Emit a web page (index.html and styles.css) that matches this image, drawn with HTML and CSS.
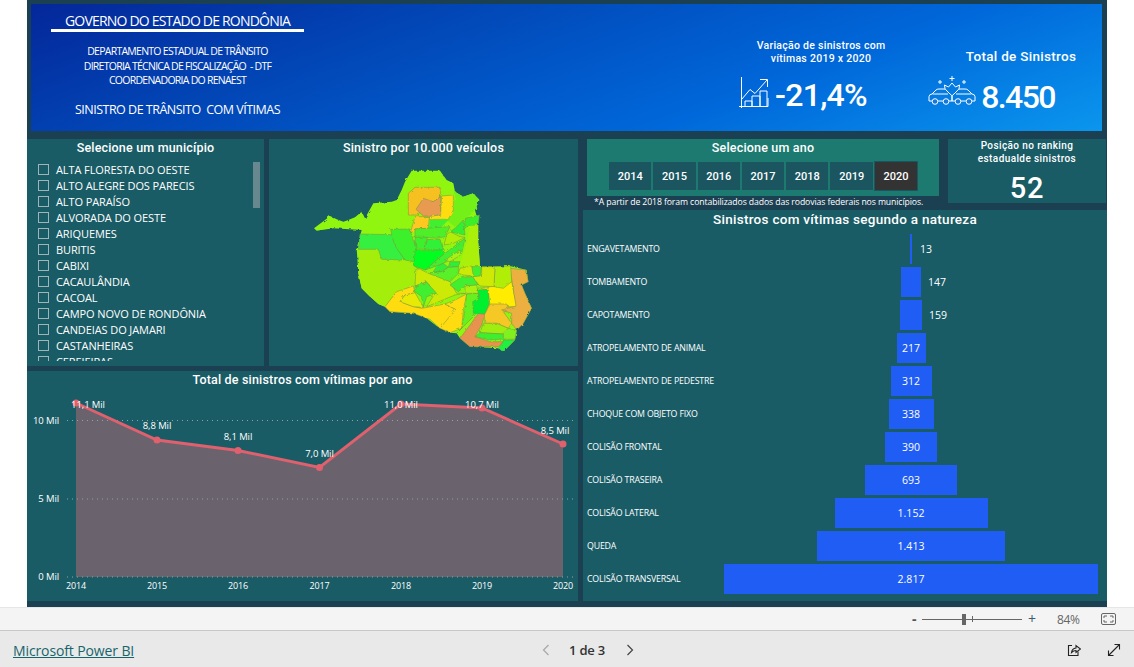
FILE: index.html
```html
<!DOCTYPE html>
<html lang="pt-BR">
<head>
<meta charset="utf-8">
<title>Microsoft Power BI</title>
<link rel="stylesheet" href="styles.css">
</head>
<body>
<main class="canvas">
  <header class="banner">
    <div class="gov">
      <div class="gov-title">GOVERNO DO ESTADO DE RONDÔNIA</div>
      <div class="gov-dept">
        <div>DEPARTAMENTO ESTADUAL DE TRÂNSITO</div>
        <div>DIRETORIA TÉCNICA DE FISCALIZAÇÃO&nbsp; - DTF</div>
        <div>COORDENADORIA DO RENAEST</div>
      </div>
      <div class="gov-sub">SINISTRO DE TRÂNSITO&nbsp; COM VÍTIMAS</div>
    </div>
    <div class="kpi kpi-var">
      <div class="kpi-label">Variação de sinistros com<br>vítimas 2019 x 2020</div>
      <div class="kpi-row">
        <svg class="icon-growth" viewBox="0 0 30 31" fill="none" stroke="#fff" stroke-width="1">
          <path d="M2.500 0V31M0 29.500H29V21"/>
          <path d="M6 29V24H13V29M13 29V19H21V29M21 29V14H28V29"/>
          <path d="M3 22L11 12.500L16 16.500L28 3M21 2.500H28.500V10"/>
        </svg>
        <span class="kpi-value">-21,4%</span>
      </div>
    </div>
    <div class="kpi kpi-total">
      <div class="kpi-label-lg">Total de Sinistros</div>
      <div class="kpi-row kpi-row-total">
        <svg class="icon-crash" viewBox="0 0 48 30" fill="none" stroke="#fff" stroke-width="1">
          <path d="M24 0V5M21.500 2.500H26.500M12 4V8M10 6H14M36 4V8M34 6H38"/>
          <path d="M17 13L16.500 9L20.500 11L24 7L27.500 11L31.500 9L31 13"/>
          <path d="M1 25V20.500Q1 18.500 4 18L8 14Q9 13 11 13H16Q18 13 19 15L22 18Q24 19 24 21V25H1ZM4.500 18H20M24 25V21Q24 19 26 18L29 15Q30 13 32 13H37Q39 13 40 14L44 18Q47 18.500 47 20.500V25H24ZM28 18H43.500"/>
          <circle cx="7" cy="25.500" r="2.800" fill="#1478dd"/>
          <circle cx="18" cy="25.500" r="2.800" fill="#1478dd"/>
          <circle cx="30" cy="25.500" r="2.800" fill="#1478dd"/>
          <circle cx="41" cy="25.500" r="2.800" fill="#1478dd"/>
        </svg>
        <span class="kpi-value kpi-value-total">8.450</span>
      </div>
    </div>
  </header>

  <div class="content">
    <div class="col-left">
      <div class="row-top">
        <section class="panel slicer">
          <h2 class="title">Selecione um município</h2>
          <div class="slicer-body">
            <ul class="mun-list">
              <li><span class="check"></span>ALTA FLORESTA DO OESTE</li>
              <li><span class="check"></span>ALTO ALEGRE DOS PARECIS</li>
              <li><span class="check"></span>ALTO PARAÍSO</li>
              <li><span class="check"></span>ALVORADA DO OESTE</li>
              <li><span class="check"></span>ARIQUEMES</li>
              <li><span class="check"></span>BURITIS</li>
              <li><span class="check"></span>CABIXI</li>
              <li><span class="check"></span>CACAULÂNDIA</li>
              <li><span class="check"></span>CACOAL</li>
              <li><span class="check"></span>CAMPO NOVO DE RONDÔNIA</li>
              <li><span class="check"></span>CANDEIAS DO JAMARI</li>
              <li><span class="check"></span>CASTANHEIRAS</li>
              <li><span class="check"></span>CEREJEIRAS</li>
            </ul>
            <div class="scroll-thumb"></div>
          </div>
        </section>
        <section class="panel map-panel">
          <h2 class="title">Sinistro por 10.000 veículos</h2>
          <svg class="map" viewBox="0 0 780 600" stroke="#7d8f45" stroke-width="1.500" stroke-linejoin="round">
            <defs>
              <filter id="rough" x="-5%" y="-5%" width="110%" height="110%" color-interpolation-filters="sRGB">
                <feTurbulence type="fractalNoise" baseFrequency="0.09" numOctaves="2" seed="4"/>
                <feDisplacementMap in="SourceGraphic" scale="9"/>
              </filter>
            </defs>
            <g class="map-shapes">
            <polygon fill="#90f50f" points="72,205 105,180 120,168 140,178 160,185 175,180 195,172 215,155 225,175 250,130 305,125 320,120 335,90 345,65 365,32 450,32 470,60 490,70 495,95 520,110 550,100 568,120 555,150 565,190 540,200 565,250 570,320 660,318 710,330 715,365 695,375 705,400 725,445 700,490 680,510 675,540 640,575 625,565 540,560 510,535 500,520 480,518 440,498 410,475 370,460 300,455 285,440 265,432 235,405 215,385 205,340 200,265 215,210 130,205 80,212" stroke="none"/>
            <polygon fill="#a3ee0a" points="205,268 265,268 275,298 335,300 370,310 375,350 370,378 320,395 285,440 265,432 235,405 215,385 205,340" stroke="none"/>
            <polygon fill="#72f018" points="495,95 520,110 550,100 568,120 555,150 525,180 495,200 470,180 490,150 495,110" stroke="none"/>
            <polygon fill="#f5c020" points="355,100 375,82 450,82 452,110 430,125 400,125 385,165 355,165"/>
            <polygon fill="#e89a50" points="378,148 400,115 430,125 452,110 452,160 435,168 400,168"/>
            <polygon fill="#ffdc10" points="455,108 490,105 490,150 475,178 418,178 415,170 452,165"/>
            <polygon fill="#ffc820" points="375,170 418,170 415,205 375,207 360,222"/>
            <polygon fill="#40f030" points="418,180 478,178 450,205 418,205" stroke="none"/>
            <polygon fill="#35f040" points="210,222 308,224 315,255 345,298 335,300 275,298 265,268 205,268"/>
            <polygon fill="#3cf02c" points="302,208 360,207 365,225 372,248 380,250 380,300 370,305 345,300 315,258 308,235"/>
            <polygon fill="#4df028" points="375,207 480,200 465,230 440,235 410,232 375,232"/>
            <polygon fill="#3cf02c" points="375,232 412,232 405,268 378,268"/>
            <polygon fill="#30f038" points="412,238 450,238 460,270 405,268"/>
            <polygon fill="#00ff20" points="375,272 455,270 465,278 440,300 405,330 372,318"/>
            <polygon fill="#b0ee08" points="480,215 510,230 525,232 490,250 462,255 470,225"/>
            <polygon fill="#33ee33" points="495,205 520,180 525,225 480,215"/>
            <polygon fill="#3cee2a" points="527,175 568,165 565,195 530,200 520,210"/>
            <polygon fill="#aaf00a" points="540,197 565,195 565,250 570,320 515,320 510,310 530,250" stroke="none"/>
            <polygon fill="#40f030" points="405,330 440,300 465,280 525,235 515,280 495,285 470,305 440,318"/>
            <polygon fill="#aaf010" points="465,300 510,270 512,285 480,305"/>
            <polygon fill="#30ee38" points="440,320 460,310 475,322 455,335 430,335"/>
            <polygon fill="#30ee38" points="480,305 510,305 505,320 475,322"/>
            <polygon fill="#58f028" points="420,338 455,335 475,322 505,320 505,340 480,365 420,352"/>
            <polygon fill="#ccea05" points="378,322 415,340 480,365 500,400 525,400 495,405 410,440 435,400 410,365 375,378"/>
            <polygon fill="#40f030" points="375,378 410,367 440,400 410,410 400,442 395,410 375,395"/>
            <polygon fill="#ffdc10" points="285,440 320,395 370,378 375,398 345,405 330,425 370,440 395,445 465,432 497,448 495,470 450,505 420,478 370,460 300,455"/>
            <polygon fill="#ffdc10" points="465,432 495,420 530,402 520,450 515,505 480,518 450,505 497,448"/>
            <polygon fill="#e8ea05" points="345,405 375,398 400,442 370,440 330,425"/>
            <polygon fill="#66f020" points="530,402 565,400 572,430 555,465 540,480 500,520 515,505 525,450"/>
            <polygon fill="#e8924f" points="565,460 585,462 575,495 555,530 600,545 640,545 625,560 540,560 510,535 540,495"/>
            <polygon fill="#00f030" points="565,390 595,388 600,425 585,462 550,460 548,425 565,415"/>
            <polygon fill="#ffec00" points="565,385 640,375 665,365 680,440 600,440 595,388"/>
            <polygon fill="#f5c825" points="600,432 650,432 665,455 640,455 665,490 655,505 620,490 585,490 583,465"/>
            <polygon fill="#ecb040" points="660,325 708,330 715,365 695,375 705,400 725,445 700,490 680,510 665,490 665,460 635,450 678,438"/>
            <polygon fill="#a0ee10" points="580,490 620,490 655,505 640,522 570,518"/>
            <polygon fill="#3cf030" points="570,518 600,520 640,522 640,537 600,540 555,530"/>
            <polygon fill="#80f020" points="640,520 655,505 680,510 675,538 640,537"/>
            <polygon fill="#20f040" points="640,540 675,540 640,575 625,565 640,545"/>
            <polygon fill="#b0ee08" points="615,320 662,318 665,365 640,385 612,380"/>
            <polygon fill="#ccea05" points="575,320 615,320 612,380 570,378 545,350 575,345"/>
            <polygon fill="#40f030" points="545,320 575,320 570,348 545,350"/>
            <polygon fill="#ccea05" points="510,325 545,318 550,348 520,345 505,340"/>
            <polygon fill="#40f030" points="515,350 548,350 565,375 525,378 505,395 480,375"/>
            <polygon fill="#aaf010" points="525,378 560,375 565,400 525,400"/>
            </g>
          </svg>
        </section>
      </div>
      <section class="panel line-panel">
        <h2 class="title">Total de sinistros com vítimas por ano</h2>
        <svg class="line-chart" viewBox="27 389 551 212">
          <polygon class="area" points="76,403 157,440 238,450.500 319.500,467.500 401,404 482,408 563,444 563,577 76,577"/>
          <path class="grid-line" d="M67 420.500H575M67 499H575M67 577H575"/>
          <polyline class="trend" points="76,403 157,440 238,450.500 319.500,467.500 401,404 482,408 563,444"/>
          <g class="dots">
            <circle cx="76" cy="403" r="3.500"/><circle cx="157" cy="440" r="3.500"/><circle cx="238" cy="450.500" r="3.500"/><circle cx="319.500" cy="467.500" r="3.500"/><circle cx="401" cy="404" r="3.500"/><circle cx="482" cy="408" r="3.500"/><circle cx="563" cy="444" r="3.500"/>
          </g>
          <g class="axis-y">
            <text x="59" y="424">10 Mil</text><text x="59" y="502">5 Mil</text><text x="59" y="580">0 Mil</text>
          </g>
          <g class="axis-x">
            <text x="76" y="589">2014</text><text x="157" y="589">2015</text><text x="238" y="589">2016</text><text x="319.500" y="589">2017</text><text x="401" y="589">2018</text><text x="482" y="589">2019</text><text x="563" y="589">2020</text>
          </g>
          <g class="data-labels">
            <text x="88" y="408">11,1 Mil</text><text x="157" y="429">8,8 Mil</text><text x="238" y="440">8,1 Mil</text><text x="319.500" y="457">7,0 Mil</text><text x="401" y="408">11,0 Mil</text><text x="482" y="408">10,7 Mil</text><text x="555" y="434">8,5 Mil</text>
          </g>
        </svg>
      </section>
    </div>

    <div class="col-right">
      <div class="right-top">
        <div class="year-block">
          <section class="year-panel">
            <h2 class="title">Selecione um ano</h2>
            <div class="years">
              <button class="year">2014</button>
              <button class="year">2015</button>
              <button class="year">2016</button>
              <button class="year">2017</button>
              <button class="year">2018</button>
              <button class="year">2019</button>
              <button class="year year-active">2020</button>
            </div>
          </section>
          <p class="note">*A partir de 2018 foram contabilizados dados das rodovias federais nos municípios.</p>
        </div>
        <section class="panel rank">
          <div class="rank-label">Posição no ranking<br>estadualde sinistros</div>
          <div class="rank-value">52</div>
        </section>
      </div>
      <section class="panel funnel-panel">
        <h2 class="title funnel-title">Sinistros com vítimas segundo a natureza</h2>
        <div class="funnel">
          <div class="f-row"><span class="f-name">ENGAVETAMENTO</span><div class="f-track"><div class="f-bar" style="width:2px"><span class="f-out f-out-13">13</span></div></div></div>
          <div class="f-row"><span class="f-name">TOMBAMENTO</span><div class="f-track"><div class="f-bar" style="width:20px"><span class="f-out">147</span></div></div></div>
          <div class="f-row"><span class="f-name">CAPOTAMENTO</span><div class="f-track"><div class="f-bar" style="width:22px"><span class="f-out">159</span></div></div></div>
          <div class="f-row"><span class="f-name">ATROPELAMENTO DE ANIMAL</span><div class="f-track"><div class="f-bar" style="width:29px">217</div></div></div>
          <div class="f-row"><span class="f-name">ATROPELAMENTO DE PEDESTRE</span><div class="f-track"><div class="f-bar" style="width:41px">312</div></div></div>
          <div class="f-row"><span class="f-name">CHOQUE COM OBJETO FIXO</span><div class="f-track"><div class="f-bar" style="width:45px">338</div></div></div>
          <div class="f-row"><span class="f-name">COLISÃO FRONTAL</span><div class="f-track"><div class="f-bar" style="width:52px">390</div></div></div>
          <div class="f-row"><span class="f-name">COLISÃO TRASEIRA</span><div class="f-track"><div class="f-bar" style="width:92px">693</div></div></div>
          <div class="f-row"><span class="f-name">COLISÃO LATERAL</span><div class="f-track"><div class="f-bar" style="width:153px">1.152</div></div></div>
          <div class="f-row"><span class="f-name">QUEDA</span><div class="f-track"><div class="f-bar" style="width:188px">1.413</div></div></div>
          <div class="f-row"><span class="f-name">COLISÃO TRANSVERSAL</span><div class="f-track"><div class="f-bar" style="width:374px">2.817</div></div></div>
        </div>
      </section>
    </div>
  </div>
</main>

<div class="zoombar">
  <span class="z-minus">-</span>
  <div class="z-slider"><span class="z-tick"></span><span class="z-thumb"></span></div>
  <span class="z-plus">+</span>
  <span class="z-pct">84%</span>
  <svg class="z-fit" viewBox="0 0 15 12" fill="none" stroke="#666" stroke-width="1">
    <rect x="0.500" y="0.500" width="14" height="11" rx="1.500"/>
    <path d="M3 5V3H6M9 3H12V5M12 7V9H9M6 9H3V7"/>
  </svg>
</div>
<footer class="pager">
  <a class="brand" href="#">Microsoft Power BI</a>
  <nav class="pages">
    <svg class="chev" viewBox="0 0 8 12" fill="none" stroke="#a8a8a8" stroke-width="1.200"><path d="M6.500 1L1.500 6L6.500 11"/></svg>
    <span class="page-text">1 de 3</span>
    <svg class="chev" viewBox="0 0 8 12" fill="none" stroke="#444" stroke-width="1.200"><path d="M1.500 1L6.500 6L1.500 11"/></svg>
  </nav>
  <div class="tools">
    <svg class="tool" viewBox="0 0 14 14" fill="none" stroke="#222" stroke-width="1.100">
      <path d="M5 2.500H1.500V12.500H11V8.500"/>
      <path d="M4.500 9.500Q5 5.500 9 5V2.500L13.500 6L9 9.500V7.500Q6.500 7.500 4.500 9.500Z"/>
    </svg>
    <svg class="tool" viewBox="0 0 14 14" fill="none" stroke="#222" stroke-width="1.100">
      <path d="M1.500 12.500L12.500 1.500M7.500 1.500H12.500V6.500M1.500 7.500V12.500H6.500"/>
    </svg>
  </div>
</footer>
</body>
</html>
```
FILE: styles.css
```css
* { box-sizing: border-box; }
html, body { margin: 0; padding: 0; }
body {
  width: 1134px;
  height: 667px;
  overflow: hidden;
  background: #fff;
  font-family: "Open Sans", "Liberation Sans", sans-serif;
  color: #fff;
}
.canvas {
  margin-left: 27px;
  width: 1080px;
  height: 607px;
  background: #1b4052;
  padding-top: 4px;
}
.banner {
  margin-left: 4px;
  width: 1071px;
  height: 127px;
  background: linear-gradient(160deg, #04279a 0%, #0245b5 30%, #0068da 68%, #0a96ee 100%);
  display: flex;
}
.gov {
  flex: none;
  margin-left: 20px;
  width: 253px;
  text-align: center;
  display: flex;
  flex-direction: column;
}
.gov-title {
  font-size: 14px;
  letter-spacing: -0.8px;
  line-height: 17px;
  margin-top: 8px;
  height: 20px;
  border-bottom: 3px solid #fff;
}
.gov-dept {
  font-size: 10.5px;
  letter-spacing: -0.74px;
  line-height: 14.500px;
  margin-top: 12px;
}
.gov-sub {
  font-size: 12.5px;
  letter-spacing: -0.5px;
  line-height: 16px;
  margin-top: 14px;
}
.kpi {
  flex: none;
  display: flex;
  flex-direction: column;
  align-items: center;
}
.kpi-var {
  margin-left: 427px;
  width: 180px;
  padding-top: 35px;
}
.kpi-total {
  margin-left: 31px;
  width: 158px;
  padding-top: 44px;
}
.kpi-label {
  font-family: Roboto, sans-serif;
  font-size: 10.5px;
  font-weight: 500;
  letter-spacing: 0.28px;
  line-height: 13px;
  text-align: center;
}
.kpi-label-lg {
  font-family: Roboto, sans-serif;
  font-size: 13.5px;
  font-weight: 500;
  letter-spacing: 0.3px;
  line-height: 17px;
}
.kpi-row {
  display: flex;
  align-items: center;
  gap: 6px;
  margin-top: 12px;
  margin-right: 36px;
}
.kpi-row-total { margin-top: 14px; margin-right: 59px; gap: 5px; }
.kpi-value {
  font-family: Roboto, sans-serif;
  font-size: 32px;
  font-weight: 500;
  line-height: 36px;
  letter-spacing: -0.7px;
}
.kpi-value-total { letter-spacing: -1.6px; }
.icon-growth { width: 30px; height: 31px; margin-top: -5px; }
.icon-crash { width: 48px; height: 30px; margin-top: -13px; }

.content { display: flex; gap: 5px; margin-top: 8px; }
.col-left { width: 551px; display: flex; flex-direction: column; gap: 5px; }
.col-right { width: 524px; display: flex; flex-direction: column; }
.row-top { display: flex; gap: 5px; height: 227px; }
.panel { background: #1a5c66; }
.title {
  margin: 0;
  font-family: Roboto, sans-serif;
  font-size: 12.5px;
  font-weight: 500;
  line-height: 18px;
  height: 18px;
  letter-spacing: 0.18px;
  text-align: center;
}
.slicer { width: 237px; }
.slicer-body {
  position: relative;
  margin-top: 5px;
  height: 199px;
  overflow: hidden;
}
.mun-list {
  list-style: none;
  margin: 0;
  padding: 0 0 0 11px;
  font-size: 11px;
  letter-spacing: -0.1px;
}
.mun-list li {
  height: 16px;
  line-height: 16px;
  display: flex;
  align-items: center;
}
.check {
  width: 11px;
  height: 11px;
  border: 1px solid #9db4b8;
  margin-right: 7px;
  margin-top: -2px;
  flex: none;
}
.scroll-thumb {
  position: absolute;
  left: 226px;
  top: -3px;
  width: 7px;
  height: 49px;
  background: #66888e;
}
.map-panel { width: 309px; }
.map {
  display: block;
  width: 260px;
  height: 200px;
  margin: 3px 0 0 21px;
}
.map-shapes { filter: url(#rough); }
.line-panel { height: 230px; }
.line-chart { display: block; width: 551px; height: 212px; }
.grid-line { fill: none; stroke: #8ca4a8; stroke-width: 1; stroke-dasharray: 1 4; }
.area { fill: #6a626c; }
.trend { fill: none; stroke: #e0606e; stroke-width: 3; }
.dots circle { fill: #e0606e; }
.line-chart text { fill: #fff; font-family: "Open Sans", sans-serif; font-size: 9.500px; letter-spacing: -0.1px; }
.axis-y text { text-anchor: end; }
.axis-x text { text-anchor: middle; font-size: 9px; }
.data-labels text { text-anchor: middle; }

.right-top { display: flex; height: 71px; padding-left: 4px; gap: 9px; }
.year-block { width: 352px; }
.year-panel { background: #1d7a70; height: 57px; }
.years {
  display: grid;
  grid-template-columns: repeat(7, 42.3px);
  gap: 2px;
  margin: 5px 0 0 22px;
}
.year {
  height: 28px;
  padding: 0;
  border: 0;
  background: #1a5560;
  color: #fff;
  font-family: Roboto, sans-serif;
  font-size: 11px;
  font-weight: 500;
}
.year-active { background: #333333; outline: 1px solid #1a5560; }
.note {
  margin: 1px 0 0;
  padding-left: 7px;
  font-size: 8.7px;
  line-height: 11px;
  letter-spacing: -0.11px;
  white-space: nowrap;
}
.rank { width: 158px; height: 64px; text-align: center; }
.rank-label {
  font-family: Roboto, sans-serif;
  font-size: 10px;
  font-weight: 500;
  line-height: 13px;
  letter-spacing: 0.4px;
}
.rank-value {
  font-family: Roboto, sans-serif;
  font-size: 29px;
  font-weight: 500;
  line-height: 32px;
  letter-spacing: 0.8px;
  margin-top: 7px;
}
.funnel-panel { height: 391px; display: flex; flex-direction: column; }
.funnel-title { font-size: 13.5px; letter-spacing: 0.28px; }
.funnel { margin-top: 6px; padding-left: 4px; display: flex; flex-direction: column; gap: 3px; }
.f-row { display: flex; height: 30px; align-items: center; }
.f-name {
  width: 137px;
  font-size: 8.8px;
  letter-spacing: -0.18px;
  white-space: nowrap;
}
.f-track { width: 374px; display: flex; justify-content: center; height: 30px; }
.f-bar {
  position: relative;
  background: #1f5df5;
  height: 30px;
  display: flex;
  align-items: center;
  justify-content: center;
  font-size: 10.5px;
  white-space: nowrap;
}
.f-out { position: absolute; left: calc(100% + 7px); }
.f-out-13 { left: calc(100% + 8px); }

.zoombar {
  height: 24px;
  background: #f4f4f4;
  border-bottom: 1px solid #c8c8c8;
  border-top: 1px solid #e6e6e6;
  display: flex;
  align-items: center;
  padding-left: 912px;
  color: #666;
}
.z-minus { width: 10px; font-size: 14px; font-weight: 700; color: #555; line-height: 16px; }
.z-slider { position: relative; width: 100px; height: 1px; background: #666; }
.z-tick { position: absolute; left: 50px; top: -3px; width: 1px; height: 6px; background: #666; }
.z-thumb { position: absolute; left: 40px; top: -5px; width: 4px; height: 11px; background: #666; }
.z-plus { margin-left: 6px; width: 14px; font-size: 14px; color: #3a5a70; line-height: 16px; }
.z-pct { margin-left: 15px; font-size: 12px; width: 26px; letter-spacing: -0.3px; }
.z-fit { margin-left: 18px; width: 15px; height: 12px; }
.pager {
  height: 36px;
  background: #e9e9e9;
  display: flex;
  align-items: center;
  position: relative;
  padding: 2px 0 0 13px;
  color: #222;
}
.brand {
  font-size: 14px;
  color: #16656c;
  text-decoration: underline;
  letter-spacing: -0.12px;
}
.pages {
  position: absolute;
  left: 542px;
  top: 10px;
  display: flex;
  align-items: center;
}
.chev { width: 8px; height: 12px; }
.page-text { font-size: 13px; font-weight: 600; letter-spacing: -0.2px; color: #333; margin: 0 21px 0 19px; }
.tools { margin-left: auto; display: flex; gap: 26px; padding-right: 13px; }
.tool { width: 14px; height: 14px; }
```
